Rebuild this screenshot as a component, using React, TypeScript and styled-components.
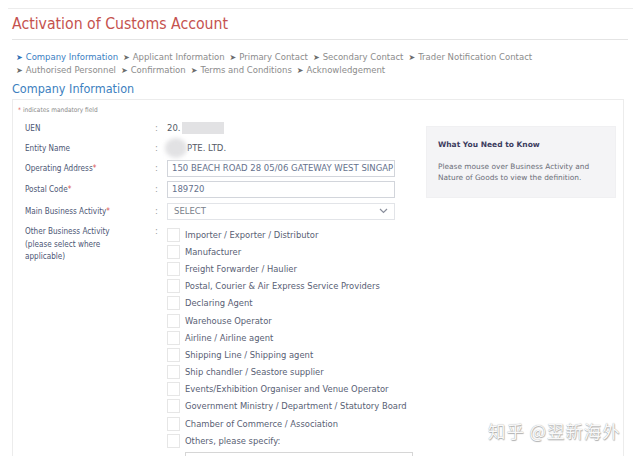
import styled, { createGlobalStyle } from "styled-components";

const condensed = `"DejaVu Sans Condensed", "DejaVu Sans", Verdana, sans-serif`;

const GlobalStyle = createGlobalStyle`
  html, body {
    margin: 0;
    padding: 0;
    background: #ffffff;
  }
  body {
    font-family: "DejaVu Sans", Verdana, sans-serif;
  }
`;

const Page = styled.div`
  position: relative;
  width: 640px;
  height: 456px;
  overflow: hidden;
`;

const Wrapper = styled.div`
  margin: 8px 7px 0 8px;
  border-top: 1px solid #ececec;
  padding-left: 4px;
`;

const Title = styled.h1`
  margin: 0 5px 0 0;
  height: 31px;
  line-height: 29px;
  font-family: ${condensed};
  font-stretch: condensed;
  font-size: 15.7px;
  font-weight: normal;
  color: #c5524e;
  border-bottom: 1px solid #e4e4e4;
  box-sizing: border-box;
`;

const Steps = styled.div`
  margin-top: 11px;
  font-size: 8.5px;
  line-height: 13px;
  color: #8c8c8c;
  padding-left: 4px;
`;

const Step = styled.span<{ $active?: boolean }>`
  color: ${(p) => (p.$active ? "#3b80c3" : "#8c8c8c")};
  margin-right: 5px;
  white-space: nowrap;
  &::before {
    content: "➤";
    font-size: 8px;
    margin-right: 3px;
    color: ${(p) => (p.$active ? "#2f6fb6" : "#6b6b6b")};
  }
`;

const SectionTitle = styled.h2`
  margin: 0;
  height: 20px;
  line-height: 20px;
  font-family: ${condensed};
  font-stretch: condensed;
  font-size: 12.5px;
  font-weight: normal;
  color: #3d7fc0;
  margin-top: 2px;
`;

const Panel = styled.div`
  margin-right: 9px;
  border: 1px solid #ececec;
  min-height: 400px;
`;

const Note = styled.div`
  padding: 4px 0 0 5px;
  height: 16px;
  box-sizing: border-box;
  font-size: 6.5px;
  line-height: 12px;
  font-family: ${condensed};
  font-stretch: condensed;
  color: #8a8a8a;
  span {
    color: #d9534f;
    margin-right: 2px;
  }
`;

const Body = styled.div`
  display: flex;
  align-items: flex-start;
  margin-top: 2px;
`;

const Form = styled.div`
  width: 413px;
  box-sizing: border-box;
  padding-left: 12px;
  flex-shrink: 0;
`;

const Row = styled.div<{ $h: number }>`
  display: grid;
  grid-template-columns: 130px 12px 1fr;
  align-items: center;
  height: ${(p) => p.$h}px;
  font-size: 8.5px;
`;

const TallRow = styled.div`
  display: grid;
  grid-template-columns: 130px 12px 1fr;
  align-items: start;
  font-size: 8.5px;
  margin-top: 3px;
`;

const Label = styled.div`
  color: #4c5674;
  line-height: 12.5px;
  font-family: ${condensed};
  font-stretch: condensed;
  font-size: 8.1px;
  span {
    color: #d9534f;
  }
`;

const Colon = styled.div`
  color: #9a9a9a;
  line-height: 12.5px;
`;

const Value = styled.div`
  color: #555a66;
  display: flex;
  align-items: center;
`;

const Masked = styled.span<{ $round?: boolean }>`
  display: inline-block;
  background: #e2e2e4;
  width: ${(p) => (p.$round ? "22px" : "42px")};
  height: ${(p) => (p.$round ? "20px" : "12px")};
  border-radius: ${(p) => (p.$round ? "50%" : "0")};
  margin-left: ${(p) => (p.$round ? "-2px" : "1px")};
  filter: blur(${(p) => (p.$round ? "2px" : "0.6px")});
`;

const TextInput = styled.div`
  width: 228px;
  height: 17px;
  box-sizing: border-box;
  border: 1px solid #d2d5db;
  padding-left: 4px;
  line-height: 15px;
  color: #65718c;
  font-size: 8.5px;
  white-space: nowrap;
  overflow: hidden;
`;

const Select = styled.div`
  width: 228px;
  height: 17px;
  box-sizing: border-box;
  border: 1px solid #e2e4e8;
  padding: 0 6px;
  display: flex;
  align-items: center;
  justify-content: space-between;
  color: #7a7f8c;
  font-size: 8.5px;
`;

const Checks = styled.div`
  display: flex;
  flex-direction: column;
  padding-top: 1px;
`;

const CheckItem = styled.label`
  display: flex;
  align-items: center;
  height: 17.2px;
  color: #585e74;
  font-size: 8.4px;
  white-space: nowrap;
`;

const Box = styled.span`
  width: 13px;
  height: 14px;
  box-sizing: border-box;
  border: 1px solid #e6e6e6;
  background: #ffffff;
  margin-right: 5px;
  flex-shrink: 0;
`;

const SpecifyInput = styled.div`
  margin-left: 18px;
  width: 226px;
  height: 12px;
  border: 1px solid #d6d6d6;
  margin-top: 3px;
`;

const Info = styled.div`
  width: 190px;
  height: 72px;
  box-sizing: border-box;
  margin-top: 8px;
  background: #f4f4f6;
  border: 1px solid #f0f0f2;
  padding: 13px 8px 0 11px;
`;

const InfoTitle = styled.div`
  font-size: 7.5px;
  font-weight: bold;
  color: #3c3c5e;
  line-height: 10px;
`;

const InfoText = styled.div`
  margin-top: 12px;
  font-size: 7.4px;
  line-height: 10.5px;
  color: #6b6e78;
  white-space: nowrap;
`;

const Watermark = styled.div`
  position: absolute;
  left: 488px;
  top: 418px;
  font-family: "Noto Sans CJK SC", sans-serif;
  font-size: 17.5px;
  letter-spacing: 0.9px;
  color: rgba(255, 255, 255, 0.95);
  text-shadow: 0 0 1px #9a9a9a, 0.5px 0.5px 1px #b0b0b0;
`;

const steps = [
  "Company Information",
  "Applicant Information",
  "Primary Contact",
  "Secondary Contact",
  "Trader Notification Contact",
];
const steps2 = [
  "Authorised Personnel",
  "Confirmation",
  "Terms and Conditions",
  "Acknowledgement",
];

const activities = [
  "Importer / Exporter / Distributor",
  "Manufacturer",
  "Freight Forwarder / Haulier",
  "Postal, Courier & Air Express Service Providers",
  "Declaring Agent",
  "Warehouse Operator",
  "Airline / Airline agent",
  "Shipping Line / Shipping agent",
  "Ship chandler / Seastore supplier",
  "Events/Exhibition Organiser and Venue Operator",
  "Government Ministry / Department / Statutory Board",
  "Chamber of Commerce / Association",
  "Others, please specify:",
];

const Chevron = () => (
  <svg width="9" height="6" viewBox="0 0 9 6">
    <path d="M1 1 L4.5 4.5 L8 1" fill="none" stroke="#8a8f9c" strokeWidth="1.2" />
  </svg>
);

export default function App() {
  return (
    <Page>
      <GlobalStyle />
      <Wrapper>
        <Title>Activation of Customs Account</Title>
        <Steps>
          <div>
            {steps.map((s, i) => (
              <Step key={s} $active={i === 0}>
                {s}
              </Step>
            ))}
          </div>
          <div>
            {steps2.map((s) => (
              <Step key={s}>{s}</Step>
            ))}
          </div>
        </Steps>
        <SectionTitle>Company Information</SectionTitle>
        <Panel>
          <Note>
            <span>*</span>indicates mandatory field
          </Note>
          <Body>
            <Form>
              <Row $h={20}>
                <Label>UEN</Label>
                <Colon>:</Colon>
                <Value>
                  20.
                  <Masked />
                </Value>
              </Row>
              <Row $h={20}>
                <Label>Entity Name</Label>
                <Colon>:</Colon>
                <Value>
                  <Masked $round />
                  PTE. LTD.
                </Value>
              </Row>
              <Row $h={21}>
                <Label>
                  Operating Address<span>*</span>
                </Label>
                <Colon>:</Colon>
                <TextInput>150 BEACH ROAD 28 05/06 GATEWAY WEST SINGAP</TextInput>
              </Row>
              <Row $h={21}>
                <Label>
                  Postal Code<span>*</span>
                </Label>
                <Colon>:</Colon>
                <TextInput>189720</TextInput>
              </Row>
              <Row $h={22}>
                <Label>
                  Main Business Activity<span>*</span>
                </Label>
                <Colon>:</Colon>
                <Select>
                  SELECT
                  <Chevron />
                </Select>
              </Row>
              <TallRow>
                <Label>
                  Other Business Activity
                  <br />
                  (please select where
                  <br />
                  applicable)
                </Label>
                <Colon>:</Colon>
                <Checks>
                  {activities.map((a) => (
                    <CheckItem key={a}>
                      <Box />
                      {a}
                    </CheckItem>
                  ))}
                  <SpecifyInput />
                </Checks>
              </TallRow>
            </Form>
            <Info>
              <InfoTitle>What You Need to Know</InfoTitle>
              <InfoText>
                Please mouse over Business Activity and
                <br />
                Nature of Goods to view the definition.
              </InfoText>
            </Info>
          </Body>
        </Panel>
      </Wrapper>
      <Watermark>知乎 @翌新海外</Watermark>
    </Page>
  );
}
